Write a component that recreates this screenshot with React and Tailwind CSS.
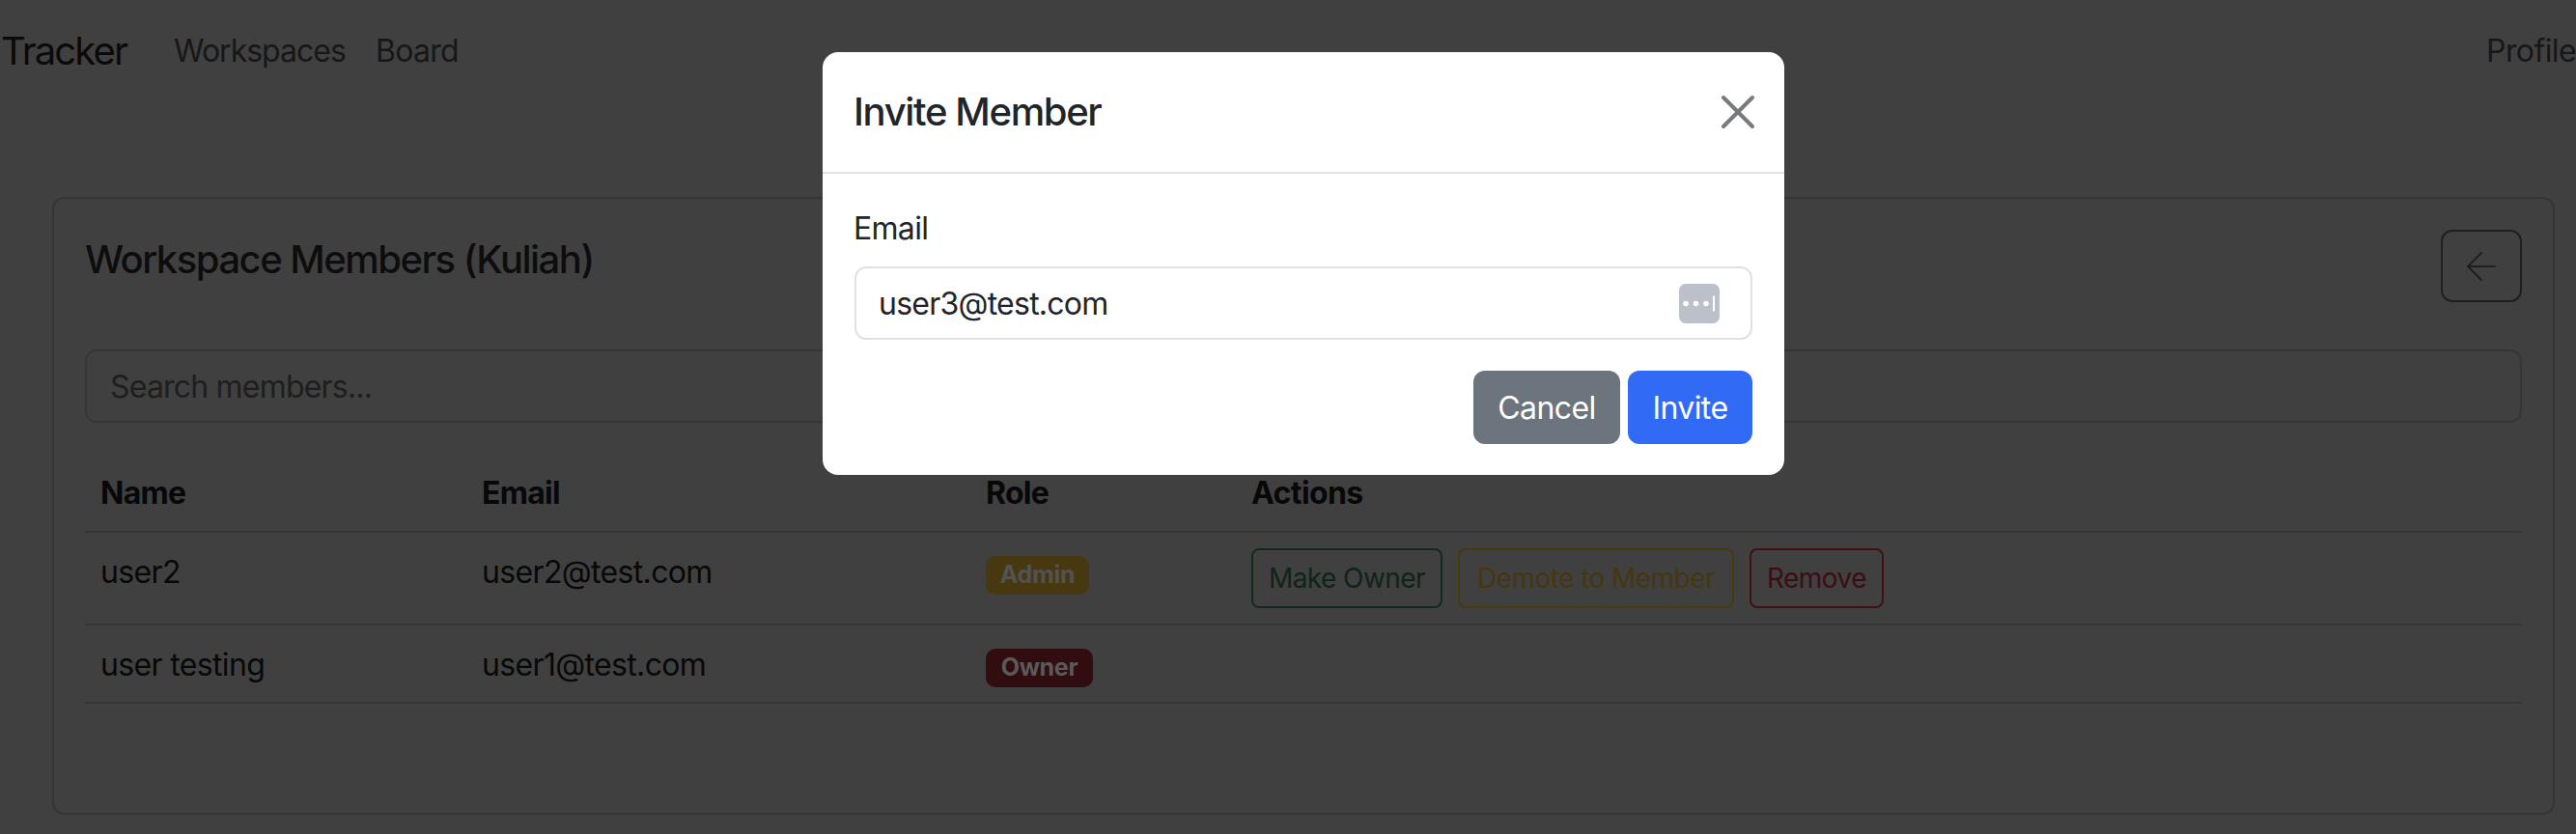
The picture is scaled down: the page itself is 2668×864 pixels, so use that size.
import { ArrowLeft, X } from "lucide-react";

const font = { fontFamily: "Inter, 'Liberation Sans', sans-serif" };

const members = [
  { name: "user2", email: "user2@test.com", role: "Admin", canEdit: true },
  { name: "user testing", email: "user1@test.com", role: "Owner", canEdit: false },
];

function RoleBadge({ role }) {
  if (role === "Admin") {
    return (
      <span className="inline-flex h-[40px] w-[107px] items-center justify-center rounded-[10px] bg-[#483810] text-[25px] font-bold tracking-[-0.3px] text-[#525252]">
        Admin
      </span>
    );
  }
  return (
    <span className="inline-flex h-[40px] w-[111px] items-center justify-center rounded-[10px] bg-[#320d10] text-[25px] font-bold tracking-[-0.3px] text-[#5a5a5a]">
      Owner
    </span>
  );
}

function InviteModal() {
  return (
    <div className="absolute inset-0 flex justify-center pl-[32px] pt-[54px]">
      <div className="h-[438px] w-[996px] rounded-[16px] bg-white text-[#212529]">
        <div className="flex h-[126px] items-center justify-between border-b-2 border-[#dee2e6] pl-[32px] pr-[32px]">
          <h5 className="text-[40px] font-medium tracking-[-1.35px]">Invite Member</h5>
          <X className="h-[60px] w-[60px] translate-x-[14px] text-[#777a7d]" strokeWidth={1.6} />
        </div>
        <div className="px-[33px] pt-[32px]">
          <label className="block h-[48px] -translate-x-[1px] translate-y-[1px] text-[32px] leading-[48px] tracking-[-0.7px]">Email</label>
          <div className="mt-[16px] flex h-[76px] items-center justify-between rounded-[12px] border-2 border-[#dee2e6] pl-[24px] pr-[32px]">
            <span className="-translate-x-[1px] translate-y-[1px] text-[32px] tracking-[-0.75px]">user3@test.com</span>
            <svg width="42" height="41" viewBox="0 0 42 41">
              <rect width="42" height="41" rx="7" fill="#bcc0cb" />
              <circle cx="7" cy="20.5" r="2.8" fill="#fff" />
              <circle cx="17.5" cy="20.5" r="2.8" fill="#fff" />
              <circle cx="28" cy="20.5" r="2.8" fill="#fff" />
              <rect x="35" y="12.5" width="2" height="16" fill="#fff" />
            </svg>
          </div>
          <div className="mt-[32px] flex justify-end gap-[8px]">
            <button className="h-[76px] w-[152px] rounded-[12px] bg-[#6c757d] pt-[2px] text-[32px] tracking-[-0.6px] text-white">Cancel</button>
            <button className="h-[76px] w-[129px] rounded-[12px] bg-[#316bf5] pt-[2px] text-[32px] tracking-[-0.6px] text-white">Invite</button>
          </div>
        </div>
      </div>
    </div>
  );
}

export default function App() {
  return (
    <div className="relative h-[864px] w-[2668px] overflow-hidden bg-[#404040]" style={font}>
      <nav className="flex h-[106px] items-center justify-between pl-[1px] text-[32px] text-[#171717]">
        <div className="flex items-center">
          <span className="w-[179px] text-[40px] tracking-[-1.9px] text-[#0a0a0a]">Tracker</span>
          <span className="w-[209px] tracking-[-1px]">Workspaces</span>
          <span className="tracking-[-0.7px]">Board</span>
        </div>
        <span className="tracking-[-0.6px]">Profile</span>
      </nav>

      <main className="pl-[54px] pr-[22px] pt-[98px]">
        <div className="h-[640px] rounded-[12px] border-2 border-[#353535] px-[32px] pt-[32px]">
          <div className="flex h-[124px] items-start justify-between">
            <h4 className="pt-[7px] text-[40px] font-medium leading-[48px] tracking-[-1.5px] text-[#0d0d0d]">Workspace Members (Kuliah)</h4>
            <button className="flex h-[75px] w-[84px] items-center justify-center rounded-[12px] border-2 border-[#1f1f1f] text-[#1f1f1f]">
              <ArrowLeft className="h-[48px] w-[48px]" strokeWidth={1} />
            </button>
          </div>
          <div className="flex h-[76px] items-center rounded-[12px] border-2 border-[#363636] pl-[24px] pt-[2px] text-[32px] tracking-[-0.8px] text-[#1e1e1e]">
            Search members...
          </div>

          <table className="mt-[32px] w-full table-fixed border-collapse text-left text-[32px] text-[#080808]">
            <colgroup>
              <col className="w-[395px]" />
              <col className="w-[522px]" />
              <col className="w-[275px]" />
              <col />
            </colgroup>
            <thead>
              <tr className="h-[81px] border-b-2 border-[#363636] align-top">
                <th className="pl-[16px] pt-[17px] font-bold tracking-[-0.7px]">Name</th>
                <th className="pl-[16px] pt-[17px] font-bold tracking-[-0.7px]">Email</th>
                <th className="pl-[16px] pt-[17px] font-bold tracking-[-0.7px]">Role</th>
                <th className="pl-[16px] pt-[17px] font-bold tracking-[-0.6px]">Actions</th>
              </tr>
            </thead>
            <tbody>
              {members.map((member) => (
                <tr key={member.email} className={`${member.canEdit ? "h-[96px]" : "h-[81px]"} border-b-2 border-[#363636] align-top`}>
                  <td className="pl-[16px] pt-[17px] tracking-[-0.65px]">{member.name}</td>
                  <td className="pl-[16px] pt-[17px] tracking-[-0.65px]">{member.email}</td>
                  <td className="pl-[16px] pt-[17px]">
                    <RoleBadge role={member.role} />
                  </td>
                  <td className="pl-[16px] pt-[16px]">
                    {member.canEdit && (
                      <div className="flex gap-[16px] text-[28px] tracking-[-0.55px]">
                        <button className="h-[62px] w-[198px] rounded-[8px] border-2 border-[#112a1a] text-[#0f2417]">Make Owner</button>
                        <button className="h-[62px] w-[286px] rounded-[8px] border-2 border-[#483810] text-[#46360e]">Demote to Member</button>
                        <button className="h-[62px] w-[139px] rounded-[8px] border-2 border-[#401015] text-[#3c0e13]">Remove</button>
                      </div>
                    )}
                  </td>
                </tr>
              ))}
            </tbody>
          </table>
        </div>
      </main>

      <InviteModal />
    </div>
  );
}
